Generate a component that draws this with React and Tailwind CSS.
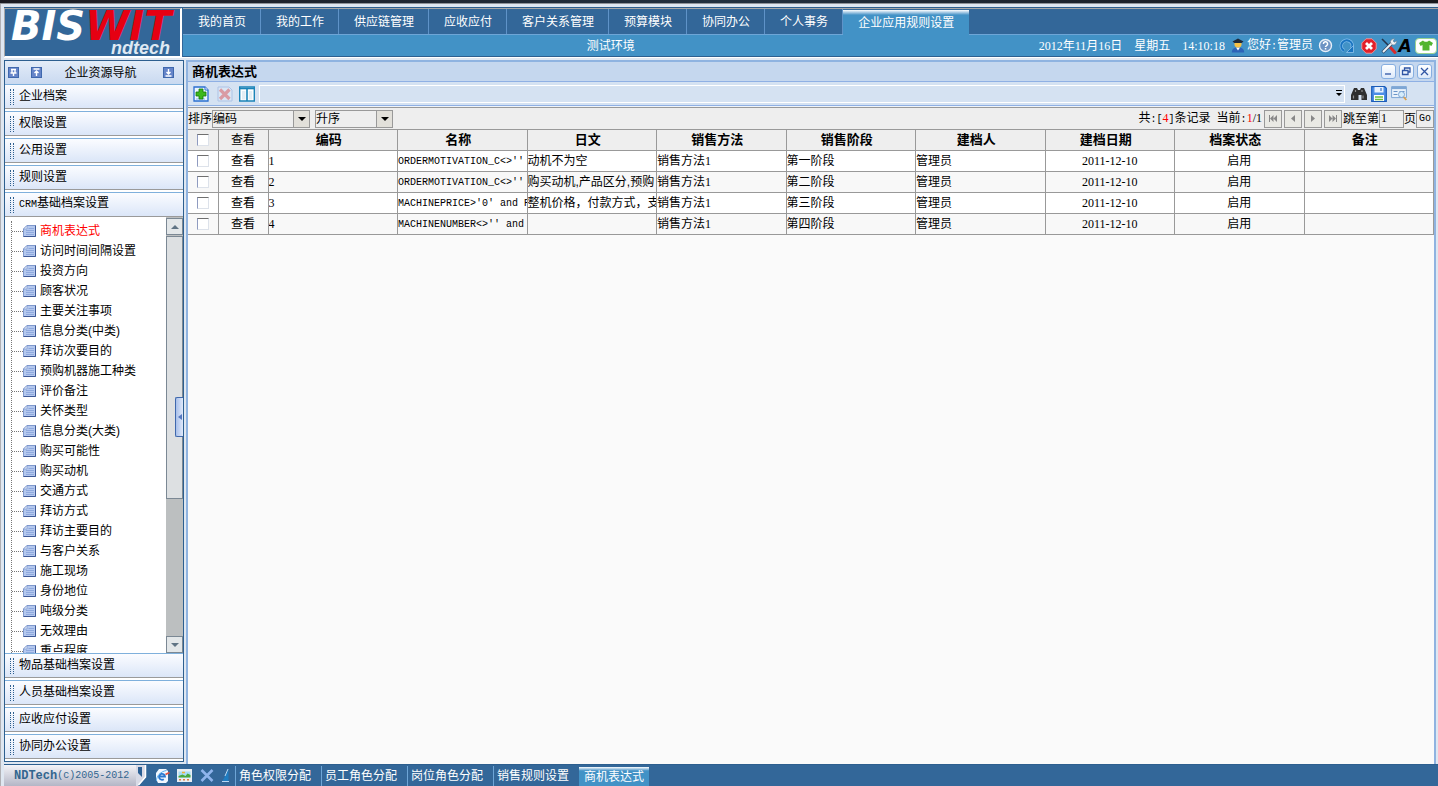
import { useState } from "react";
import clsx from "clsx";

const navTabs = ["我的首页", "我的工作", "供应链管理", "应收应付", "客户关系管理", "预算模块", "协同办公", "个人事务", "企业应用规则设置"];

const topGroups = ["企业档案", "权限设置", "公用设置", "规则设置"];
const bottomGroups = ["物品基础档案设置", "人员基础档案设置", "应收应付设置", "协同办公设置"];

const treeItems = [
  "商机表达式", "访问时间间隔设置", "投资方向", "顾客状况", "主要关注事项", "信息分类(中类)", "拜访次要目的", "预购机器施工种类",
  "评价备注", "关怀类型", "信息分类(大类)", "购买可能性", "购买动机", "交通方式", "拜访方式", "拜访主要目的", "与客户关系",
  "施工现场", "身份地位", "吨级分类", "无效理由", "重点程度",
];

const columns = ["编码", "名称", "日文", "销售方法", "销售阶段", "建档人", "建档日期", "档案状态", "备注"];

const rows = [
  { code: "1", name: "ORDERMOTIVATION_C<>''", jp: "动机不为空", stage: "第一阶段" },
  { code: "2", name: "ORDERMOTIVATION_C<>''", jp: "购买动机,产品区分,预购", stage: "第二阶段" },
  { code: "3", name: "MACHINEPRICE>'0' and P", jp: "整机价格，付款方式，支", stage: "第三阶段" },
  { code: "4", name: "MACHINENUMBER<>'' and", jp: "", stage: "第四阶段" },
];

const openPages = ["角色权限分配", "员工角色分配", "岗位角色分配", "销售规则设置"];

// Latin text set half as wide as a Chinese character
function Half({ children, className }) {
  return <span className={clsx("font-['Liberation_Mono',monospace] text-[10px]", className)}>{children}</span>;
}

// Digits, whose serif form is also half a character wide
function Num({ children, className }) {
  return <span className={clsx("font-['Liberation_Serif',serif]", className)}>{children}</span>;
}

function IconButton({ label, children, className }) {
  return (
    <button type="button" aria-label={label} className={clsx("flex shrink-0 items-center justify-center", className)}>
      {children}
    </button>
  );
}

function Logo() {
  return (
    <div className="flex w-[178px] shrink-0 flex-col border-t border-r-2 border-b border-l border-t-[#a8a8a8] border-r-white border-b-white border-l-[#a8a8a8] bg-[#336799] text-white">
      <div className="pl-1.5 font-['DejaVu_Sans',sans-serif] text-[40px] leading-[34px] font-bold whitespace-nowrap italic">
        BIS<span className="text-[#e60012]">WIT</span>
      </div>
      <div className="pr-2.5 text-right font-['Liberation_Sans',sans-serif] text-[18px] leading-[10px] font-bold text-[#dfe9f3] italic">ndtech</div>
    </div>
  );
}

function StatusIcons() {
  return (
    <div className="flex items-center">
      <IconButton label="帮助" className="ml-1 w-4">
        <svg width="15" height="15" viewBox="0 0 15 15">
          <circle cx="7.5" cy="7.5" r="6" fill="#6d93c4" stroke="#e6eef8" strokeWidth="1.4" />
          <path d="M5.4 6a2.1 2.1 0 1 1 3 1.8c-.7.4-.9.6-.9 1.3" fill="none" stroke="#fff" strokeWidth="1.5" />
          <rect x="6.8" y="10" width="1.5" height="1.5" fill="#fff" />
        </svg>
      </IconButton>
      <IconButton label="刷新" className="ml-1.5 w-4">
        <svg width="16" height="16" viewBox="0 0 16 16">
          <path d="M5 12.6A5.5 5.5 0 1 1 12.8 10" fill="none" stroke="#7fbcec" strokeWidth="3.4" />
          <path d="M5 12.6A5.5 5.5 0 1 1 12.8 10" fill="none" stroke="#1a74c0" strokeWidth="2" />
          <path d="M7.500 14.500h7v-7z" fill="#1a74c0" stroke="#9ccbf0" strokeWidth=".7" />
        </svg>
      </IconButton>
      <IconButton label="退出" className="ml-1.5 w-4">
        <svg width="16" height="16" viewBox="0 0 16 16">
          <path d="M5 .8h6L15.200 5v6L11 15.200H5L.8 11V5z" fill="#e3202a" stroke="#f7a6a6" strokeWidth=".8" />
          <path d="m5 5 6 6m0-6-6 6" stroke="#fff" strokeWidth="2.800" />
        </svg>
      </IconButton>
      <IconButton label="设置" className="ml-1 w-4">
        <svg width="16" height="16" viewBox="0 0 16 16">
          <path d="m1 1 8 8" stroke="#24354c" strokeWidth="1.600" />
          <path d="m9 9 5 5.400" stroke="#d92b2b" strokeWidth="3" strokeLinecap="round" />
          <path d="M1.500 14.500 11 5" stroke="#34506e" strokeWidth="3.200" />
          <path d="M2 14 11 5" stroke="#eef2f6" strokeWidth="1.800" />
          <path d="M9.500 3.500C10 1.300 12.500.5 13.500.8L12 3l1.300 1.200L15.600 3s.2 3-2.300 3.800c-2 .5-3.800-1-3.800-3.300z" fill="#eef2f6" stroke="#6d7886" strokeWidth=".5" />
        </svg>
      </IconButton>
      <IconButton label="字体" className="w-4 font-['DejaVu_Sans',sans-serif] text-[17px] leading-4 font-bold text-black italic">
        A
      </IconButton>
      <IconButton label="换肤" className="mr-px ml-0.5 h-[16px] w-[22px] rounded-[4px] border border-[#9bd38f] bg-white">
        <svg width="14" height="11" viewBox="0 0 14 11">
          <path d="M4 .5 0 3l1.600 3L3.500 5v5.500h7V5l1.900 1L14 3 10 .5C9 2.200 5 2.200 4 .5z" fill="#52b530" />
        </svg>
      </IconButton>
    </div>
  );
}

function Header() {
  return (
    <header className="flex h-[51px] shrink-0 border-t border-b border-t-[#2d5f8f] border-b-white bg-[#336799]">
      <Logo />
      <div className="ml-px flex min-w-0 flex-1 flex-col border-t border-b border-t-[#a8a8a8] border-b-[#2d5f8f] bg-[#4292c6] text-white">
        <nav className="flex h-[26px] border-b border-[#6ea5d6] bg-[#336799]">
          {navTabs.map((tab, i) => {
            const active = i === navTabs.length - 1;
            return (
              <a
                key={tab}
                href="#"
                className={clsx(
                  "whitespace-nowrap",
                  active
                    ? "mt-px h-[25px] bg-[#4292c6] bg-linear-to-b from-white via-[#4292c6] via-20% to-[#4292c6] px-[15px] leading-[26px]"
                    : "border-r border-[#5f93c8] pr-[14px] pl-[15px] leading-[26px]"
                )}
              >
                {tab}
              </a>
            );
          })}
        </nav>
        <div className="flex h-[21px] items-center whitespace-nowrap">
          <div className="flex-1 text-center">测试环境</div>
          <div className="mr-3">
            <Num>2012</Num>年<Num>11</Num>月<Num>16</Num>日
          </div>
          <div className="mr-3">星期五</div>
          <Num className="mr-1.5">14:10:18</Num>
          <svg width="14" height="15" viewBox="0 0 14 15">
            <path d="M.8 14.500c0-4 2.700-5 6.200-5s6.200 1 6.200 5z" fill="#2c63b8" />
            <path d="m5 9.400 2 3 2-3z" fill="#fff" />
            <circle cx="7" cy="6" r="3.600" fill="#f4c146" />
            <path d="M1.500 3.400 7 .4l5.500 3L10.600 5H3.400z" fill="#1d2a3c" />
          </svg>
          <div className="ml-0.5">您好<Half>:</Half>管理员</div>
          <StatusIcons />
        </div>
      </div>
    </header>
  );
}

function MiniButton({ label, d }) {
  return (
    <IconButton label={label} className="size-[11px] border border-[#3f68ad] bg-[#6584c8]">
      <svg width="9" height="9" viewBox="0 0 9 9">
        <path d={d} fill="none" stroke="#fff" strokeWidth="1.400" />
      </svg>
    </IconButton>
  );
}

function Group({ children }) {
  return (
    <button
      type="button"
      className="flex h-[25px] w-full shrink-0 items-center border-t border-b border-t-[#7fb0dc] border-b-[#9a9a9a] bg-linear-to-b from-[#fbfcff] to-[#dbe6f8] pl-[5px] text-left whitespace-nowrap"
    >
      <span className="mr-[5px] h-4 w-[4px] border-x border-dotted border-[#2d5f8f]" />
      <span className="pb-0.5">{children}</span>
    </button>
  );
}

function TreeIcon() {
  return (
    <svg width="14" height="13" viewBox="0 0 14 13" className="shrink-0">
      <path d="M4 .5h8.500v11H.5V4z" fill="#b4c8ee" stroke="#7f98cc" />
      <path d="M12.500.5v11H.5" fill="none" stroke="#3d5896" />
      <path d="M4 .5V4H.5z" fill="#e6eefb" stroke="#7f98cc" strokeWidth=".7" />
      <path d="M5.500 3.500h5.500M3 5.500h8M3 7.500h8M3 9.500h8" stroke="#8fa9de" />
    </svg>
  );
}

function ScrollBar() {
  const button = "flex h-[17px] w-full shrink-0 items-center justify-center border border-[#7b8894] bg-[#e3e7e9]";
  return (
    <div className="flex w-[17px] shrink-0 flex-col bg-[#bcbfc0] pt-px">
      <div className={button}>
        <svg width="8" height="4" viewBox="0 0 8 4"><path d="M0 4h8L4 0z" fill="#607484" /></svg>
      </div>
      <div className="mt-px h-[263px] border border-[#7b8894] bg-[#dde0e2]" />
      <div className="flex-1" />
      <div className={button}>
        <svg width="8" height="4" viewBox="0 0 8 4"><path d="M0 0h8L4 4z" fill="#607484" /></svg>
      </div>
    </div>
  );
}

function Sidebar() {
  return (
    <aside className="relative flex w-[180px] shrink-0 flex-col border border-[#2d5f8f] bg-white">
      <div className="flex h-[23px] shrink-0 items-center bg-linear-to-b from-[#e3ecf8] to-[#c9d9f0] px-[3px]">
        <MiniButton label="固定" d="M2 1.500h5M3 1.500v3.500M6 1.500v3.500M1.500 5h6M4.500 5v3" />
        <div className="w-3" />
        <MiniButton label="全部收起" d="M1.500 1h6M4.500 8V3M2.500 5l2-2 2 2" />
        <h2 className="flex-1 text-center">企业资源导航</h2>
        <div className="w-1" />
        <MiniButton label="全部展开" d="M4.500 1v5M2.500 4l2 2 2-2M1.500 8h6" />
        <div className="w-1.5" />
      </div>
      <div className="flex shrink-0 flex-col gap-0.5">
        {topGroups.map((g) => (
          <Group key={g}>{g}</Group>
        ))}
        <Group><Half>CRM</Half>基础档案设置</Group>
      </div>
      <div className="flex min-h-0 flex-1">
        <div className="min-w-0 flex-1 overflow-hidden pt-1 pl-1.5">
          <ul className="border-l border-dotted border-[#777]">
            {treeItems.map((item, i) => (
              <li key={item} className="flex h-5 items-center">
                <span className="w-[11px] shrink-0 border-t border-dotted border-[#777]" />
                <TreeIcon />
                <a href="#" className={clsx("ml-[3px] whitespace-nowrap", i === 0 && "text-[#f00]")}>
                  {item}
                </a>
              </li>
            ))}
          </ul>
        </div>
        <ScrollBar />
      </div>
      <div className="flex shrink-0 flex-col gap-0.5 pb-0.5">
        {bottomGroups.map((g) => (
          <Group key={g}>{g}</Group>
        ))}
      </div>
      {/* handle that folds the sidebar away */}
      <button
        type="button"
        aria-label="收起导航"
        className="absolute top-[48%] right-0 flex h-10 w-2 items-center justify-center rounded-l-[2px] border border-r-0 border-[#3f68ad] bg-linear-to-r from-[#a9c0ea] to-[#dfe9fa]"
      >
        <svg width="4" height="6" viewBox="0 0 4 6"><path d="M4 0v6L0 3z" fill="#5578c0" /></svg>
      </button>
    </aside>
  );
}

function WindowButton({ label, d }) {
  return (
    <IconButton label={label} className="size-[15px] rounded-[3px] border border-[#86aee0] bg-linear-to-b from-white to-[#dce9fa]">
      <svg width="11" height="11" viewBox="0 0 11 11">
        <path d={d} fill="none" stroke="#2f55a4" strokeWidth="1.300" />
      </svg>
    </IconButton>
  );
}

function Toolbar() {
  return (
    <div className="flex h-[24px] shrink-0 items-center border-b border-[#8fb0e4] bg-[#d5e2f2] pl-[5px]">
      <IconButton label="新增" className="w-4">
        <svg width="16" height="16" viewBox="0 0 16 16">
          <path d="M1 1h11l3 3v11H1z" fill="#eaf4ff" stroke="#2a6fd0" strokeWidth="1.300" />
          <path d="M12 1v3h3" fill="#fff" stroke="#2a6fd0" />
          <path d="M3 13h9" stroke="#7db4ee" />
          <path d="M6 3h4v3h3v4h-3v3H6v-3H3V6h3z" fill="#3db81c" stroke="#157a08" strokeWidth=".8" />
        </svg>
      </IconButton>
      <IconButton label="删除" className="ml-2 w-4 opacity-45">
        <svg width="16" height="16" viewBox="0 0 16 16">
          <path d="M1 1h11l3 3v11H1z" fill="#e2ebf8" stroke="#7d9fd8" />
          <path d="m3 3.500 9.500 9.500m0-9.500L3 13" stroke="#e04848" strokeWidth="3.200" />
        </svg>
      </IconButton>
      <IconButton label="列设置" className="ml-1.5 w-4">
        <svg width="16" height="16" viewBox="0 0 16 16">
          <path d="M.7 1h14.600v14H.7z" fill="#fff" stroke="#1b84b8" strokeWidth="1.400" />
          <path d="M1 2.500h14" stroke="#1b84b8" strokeWidth="1.600" />
          <path d="M8 2v13" stroke="#1b84b8" strokeWidth="1.600" />
          <path d="M3 5h3.500v8.500H3zM9.700 5h3.500v8.500H9.700z" fill="#e3eef5" />
        </svg>
      </IconButton>
      <div className="ml-1 flex h-[18px] flex-1 items-center justify-end border border-white pr-0.5">
        <svg width="6" height="7" viewBox="0 0 6 7"><path d="M0 0h6v1H0zM0 3h6L3 6z" fill="#000" /></svg>
      </div>
      <IconButton label="查找" className="ml-1.5 w-4">
        <svg width="16" height="14" viewBox="0 0 16 14">
          <path d="M3 1h3l1 2h2l1-2h3l3 7v5h-5.500V8h-3v5H0V8z" fill="#2f2f2f" />
          <path d="M2.500 8.500v3M12 8.500v3M4.500 3v2M11 3v2" stroke="#909090" strokeWidth="1.200" />
        </svg>
      </IconButton>
      <IconButton label="保存" className="ml-1 w-4">
        <svg width="16" height="16" viewBox="0 0 16 16">
          <path d="M.7.7h13l1.600 1.600v13H.7z" fill="#4c8fe6" stroke="#1c5cb8" strokeWidth="1.200" />
          <path d="M3.500 1h9v5.500h-9z" fill="#e6f1ff" />
          <path d="M10 2v3" stroke="#1c5cb8" />
          <path d="M3 9h10v6H3z" fill="#fff" />
          <path d="M4 11h8M4 13.500h8" stroke="#6cbf3c" strokeWidth="1.400" />
        </svg>
      </IconButton>
      <IconButton label="高级查询" className="mr-[27px] ml-1 w-4">
        <svg width="16" height="15" viewBox="0 0 16 15">
          <path d="M.6.6h14.800v11H.6z" fill="#eaf2fb" stroke="#7ea6d4" />
          <path d="M1 2h14" stroke="#7ea6d4" strokeWidth="2.200" />
          <path d="M2.500 5.500h4M2.500 8.500h4M8.500 5.500h5" stroke="#6a94c8" />
          <circle cx="10.500" cy="8.500" r="3" fill="#d5ecfb" stroke="#7ea6d4" />
          <path d="m12.800 11 2.500 3" stroke="#dba050" strokeWidth="1.800" />
        </svg>
      </IconButton>
    </div>
  );
}

function SortSelect({ label, options, className }) {
  return (
    <div className={clsx("relative h-[18px] border border-[#999]", className)}>
      <select aria-label={label} className="h-full w-full appearance-none bg-[#eee] leading-4 outline-none">
        {options.map((o) => (
          <option key={o}>{o}</option>
        ))}
      </select>
      <span className="pointer-events-none absolute inset-y-0 right-0 flex w-4 items-center justify-center border-l border-[#999] bg-[#e2e0da]">
        <svg width="8" height="4" viewBox="0 0 8 4"><path d="M0 0h8L4 4z" fill="#000" /></svg>
      </span>
    </div>
  );
}

function PageButton({ label, d }) {
  return (
    <IconButton label={label} className="mr-0.5 size-[18px] border border-[#999] bg-[#e9e9e4]">
      <svg width="8" height="7" viewBox="0 0 8 7"><path d={d} fill="#888" /></svg>
    </IconButton>
  );
}

function SortBar() {
  return (
    <div className="flex h-[21px] shrink-0 items-center bg-[#eee] whitespace-nowrap">
      <span>排序</span>
      <SortSelect label="排序字段" options={columns} className="w-[98px]" />
      <SortSelect label="排序方向" options={["升序", "降序"]} className="ml-[5px] w-[78px]" />
      <div className="flex-1" />
      <span className="mr-0.5">
        共<Half>:[</Half><Num className="text-[#f00]">4</Num><Half>]</Half>条记录<Half>&nbsp;</Half>当前<Half>:</Half>
        <Num><span className="text-[#f00]">1</span>/1</Num>
      </span>
      <PageButton label="首页" d="M0 0h1v7H0zM4.500 0v7L1 3.500zM8 0v7L4.500 3.500z" />
      <PageButton label="上一页" d="M6 0v7L2 3.500z" />
      <PageButton label="下一页" d="M2 0v7l4-3.500z" />
      <PageButton label="末页" d="M7 0h1v7H7zM3.500 0v7L7 3.500zM0 0v7l3.500-3.500z" />
      <label htmlFor="page" className="-ml-px">跳至第</label>
      <input
        id="page"
        defaultValue="1"
        className="h-[18px] w-[25px] border border-[#999] bg-[#eee] px-px font-['Liberation_Serif',serif] outline-none"
      />
      <span>页</span>
      <button type="button" className="h-[18px] w-[18px] border border-[#999] bg-[#eee] font-['Liberation_Mono',monospace] text-[10px] leading-4">
        Go
      </button>
    </div>
  );
}

function Tick({ label, ...props }) {
  return (
    <input
      type="checkbox"
      aria-label={label}
      className="mx-auto block size-3 appearance-none border border-t-[#6f6f6f] border-r-[#dde2ea] border-b-[#dde2ea] border-l-[#8f9bc0] bg-white checked:bg-[#336799]"
      {...props}
    />
  );
}

function RecordTable() {
  const [picked, setPicked] = useState([]);
  const all = picked.length === rows.length;
  const toggle = (code) => setPicked((p) => (p.includes(code) ? p.filter((c) => c !== code) : [...p, code]));
  const cell = "h-[21px] overflow-hidden border border-[#999] p-0 leading-[18px] whitespace-nowrap";

  return (
    <table className="w-full table-fixed border-collapse">
      <thead>
        <tr className="bg-[#eee]">
          <th className={clsx(cell, "w-[30px] border-l-0")}>
            <Tick label="全选" checked={all} onChange={() => setPicked(all ? [] : rows.map((r) => r.code))} />
          </th>
          <th className={clsx(cell, "w-[50px] font-normal")}>查看</th>
          {columns.map((c) => (
            <th key={c} className={clsx(cell, "pr-2 text-[13px] font-bold")}>{c}</th>
          ))}
        </tr>
      </thead>
      <tbody>
        {rows.map((r) => (
          <tr key={r.code} className="bg-white even:bg-[#f8f8f8]">
            <td className={clsx(cell, "border-l-0")}>
              <Tick label={r.code} checked={picked.includes(r.code)} onChange={() => toggle(r.code)} />
            </td>
            <td className={clsx(cell, "text-center")}><a href="#">查看</a></td>
            <td className={cell}><Num>{r.code}</Num></td>
            <td className={cell}><Half>{r.name}</Half></td>
            <td className={cell}>{r.jp}</td>
            <td className={cell}>销售方法<Num>1</Num></td>
            <td className={cell}>{r.stage}</td>
            <td className={cell}>管理员</td>
            <td className={clsx(cell, "text-center")}><Num>2011-12-10</Num></td>
            <td className={clsx(cell, "text-center")}>启用</td>
            <td className={cell} />
          </tr>
        ))}
      </tbody>
    </table>
  );
}

function Workspace() {
  return (
    <main className="ml-0.5 flex min-w-0 flex-1 flex-col border-2 border-b-0 border-[#8fb3e0] bg-[#fafafa]">
      <div className="flex h-[20px] shrink-0 items-center gap-[3px] border-b border-[#8fb0e4] bg-[#c5d7ee] pr-0.5 pl-1">
        <h1 className="flex-1 text-[13px] font-bold">商机表达式</h1>
        <WindowButton label="最小化" d="M2 8h6" />
        <WindowButton label="还原" d="M3.500 4V2h5.500v4H7M1.500 4.500H7v4H1.500z" />
        <WindowButton label="关闭" d="m2 2 7 7M9 2 2 9" />
      </div>
      <Toolbar />
      <div className="h-0.5 shrink-0 border-b border-[#999] bg-[#eef3fa]" />
      <SortBar />
      <RecordTable />
    </main>
  );
}

function Footer() {
  return (
    <footer className="flex h-[22px] shrink-0 items-center border-t border-[#2d5f8f] bg-[#336799] whitespace-nowrap text-white">
      <div className="flex h-full w-[132px] items-center bg-linear-to-b from-[#f4f4f8] to-[#b4b6c6] pl-2.5 text-[#33668f]">
        <span className="font-['Liberation_Mono',monospace] text-[12px] font-bold">NDTech</span>
        <Half>(c)2005-2012</Half>
      </div>
      <svg width="11" height="21" viewBox="0 0 11 21" className="shrink-0">
        <path d="M0 0h10v12L2 21H0z" fill="#d8dae6" />
        <path d="M2 2h4v10l-4-4z" fill="#2b5f94" />
        <path d="M9.500 0v12l-7 8" fill="none" stroke="#fff" strokeWidth="1.500" />
      </svg>
      <IconButton label="浏览器" className="ml-2 w-[15px]">
        <svg width="15" height="14" viewBox="0 0 15 14">
          <path d="M4 0h7l2 2v10l-2 2H3l-2-4V4z" fill="#f2f8ff" />
          <path d="M4.500 7.500h5.500a3 3 0 1 0-1.200 2.700" fill="none" stroke="#2a78d0" strokeWidth="1.800" />
          <path d="M1.500 12C1 8 5 2.500 11.500 1.500" fill="none" stroke="#58aef0" />
          <path d="m10.500 5.500 4-2" stroke="#e0503c" strokeWidth="1.800" />
        </svg>
      </IconButton>
      <IconButton label="桌面" className="ml-[7px] w-[15px]">
        <svg width="15" height="13" viewBox="0 0 15 13">
          <rect width="15" height="13" fill="#e8eef4" />
          <rect x="1.500" y="2.500" width="12" height="6" fill="#a8dcf4" />
          <path d="M1.500 8.500V7l4-1.500 3 1.500 2-2.500 3 1.500v2.500z" fill="#4aa83c" />
          <path d="M5 3.500h3" stroke="#f0b030" strokeWidth="1.500" />
          <path d="M2 10.800h2M6 10.800h2M10 10.800h2" stroke="#e08040" strokeWidth="1.400" />
        </svg>
      </IconButton>
      <IconButton label="关闭全部" className="ml-2 w-[14px]">
        <svg width="14" height="13" viewBox="0 0 14 13">
          <path d="m1.500 1 11 11m0-11-11 11" stroke="#8fb4ec" strokeWidth="2.600" />
        </svg>
      </IconButton>
      <svg width="7" height="13" viewBox="0 0 7 13" className="ml-2 shrink-0">
        <path d="M6.500 0v13H0z" fill="#1f7cc0" />
        <path d="M6 0 3 7M0 12.500h7" fill="none" stroke="#b8d8f4" />
      </svg>
      <nav className="ml-1.5 flex h-full items-end">
        {openPages.map((p) => (
          <a key={p} href="#" className="h-5 w-[86px] border-l border-[#6ea5d6] pl-[3px] leading-[21px]">
            {p}
          </a>
        ))}
        <a href="#" className="h-[19px] bg-[#4292c6] bg-linear-to-b from-white via-[#4292c6] via-20% to-[#4292c6] px-[5px] leading-[21px]">
          商机表达式
        </a>
      </nav>
    </footer>
  );
}

export default function App() {
  return (
    <div className="flex h-screen flex-col overflow-hidden bg-[#dfe7f1] font-['Liberation_Sans','Noto_Sans_CJK_SC',sans-serif] text-[12px] leading-4 text-black">
      <div className="h-1 shrink-0 border-b border-[#8f9399] bg-linear-to-r from-[#1b1b22] via-[#22303f] to-[#17171c]" />
      <div className="flex min-h-0 flex-1 flex-col border-l border-[#b0b0b4] pt-[3px] pl-[3px]">
        <Header />
        <div className="flex min-h-0 flex-1 pt-0.5 pr-0.5">
          <div className="flex min-h-0 pb-0.5">
            <Sidebar />
          </div>
          <Workspace />
        </div>
        <Footer />
      </div>
    </div>
  );
}
